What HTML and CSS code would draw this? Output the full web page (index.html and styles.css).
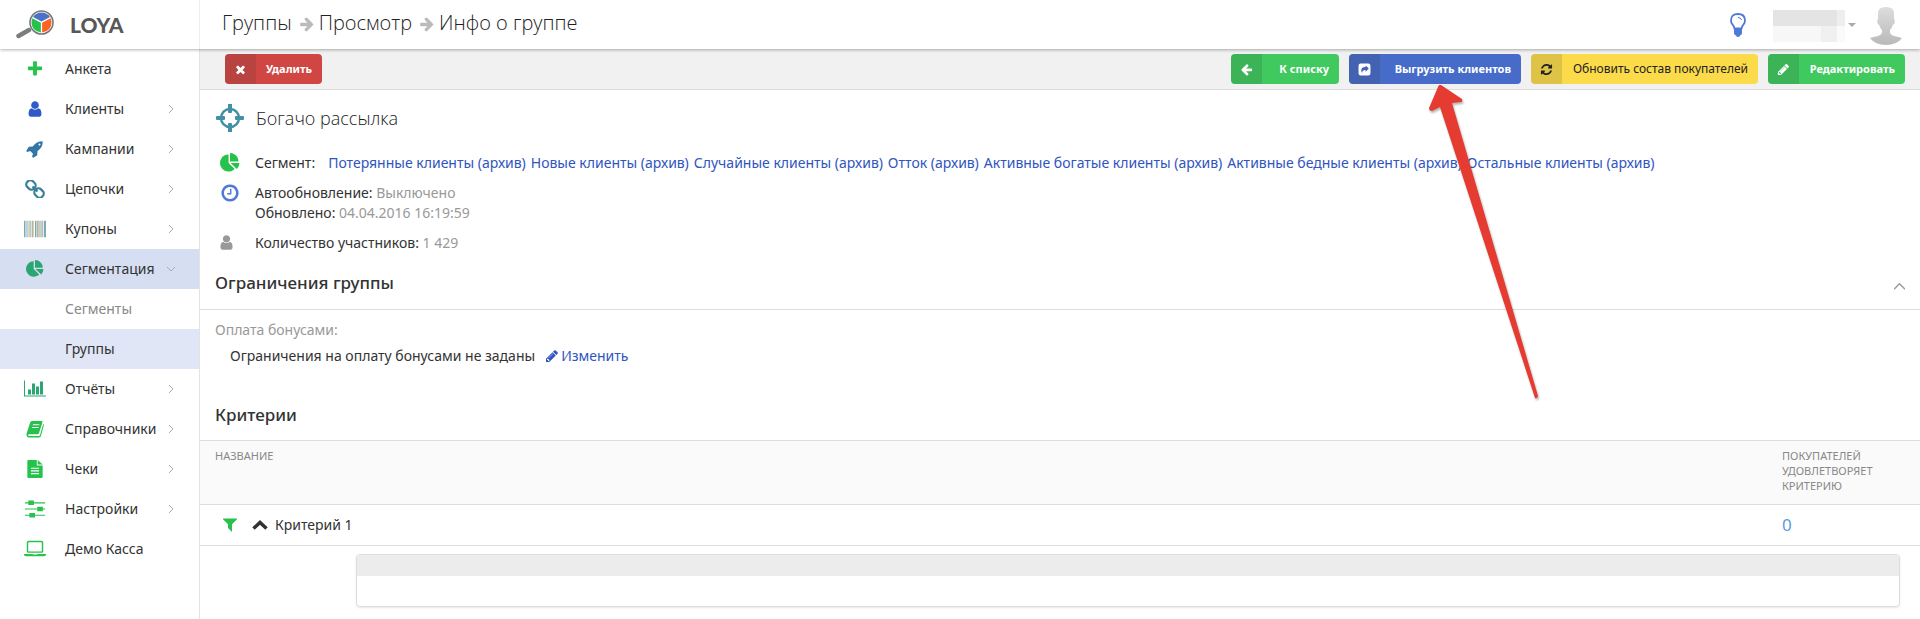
FILE: index.html
```html
<!DOCTYPE html>
<html lang="ru">
    <head>
        <meta charset="UTF-8" />
        <meta name="viewport" content="width=device-width, initial-scale=1.0" />
        <title>LOYA - Инфо о группе</title>

        <link rel="stylesheet" href="styles.css">
    </head>
    <body>
        <svg class="sprite" aria-hidden="true">
            <symbol id="i-plus" viewBox="0 0 1792 1792"><path d="M1600 736v192q0 40-28 68t-68 28h-416v416q0 40-28 68t-68 28h-192q-40 0-68-28t-28-68v-416h-416q-40 0-68-28t-28-68v-192q0-40 28-68t68-28h416v-416q0-40 28-68t68-28h192q40 0 68 28t28 68v416h416q40 0 68 28t28 68z"/></symbol>
            <symbol id="i-user" viewBox="0 0 1792 1792"><path d="M1536 1399q0 109-62.5 187t-150.5 78h-854q-88 0-150.5-78t-62.5-187q0-85 8.5-160.5t31.5-152 58.5-131 94-89 134.5-34.5q131 128 313 128t313-128q76 0 134.5 34.5t94 89 58.5 131 31.5 152 8.5 160.5zm-256-887q0 159-112.5 271.5t-271.5 112.5-271.5-112.5-112.5-271.5 112.5-271.5 271.5-112.5 271.5 112.5 112.5 271.5z"/></symbol>
            <symbol id="i-rocket" viewBox="0 0 1792 1792"><path d="M1440 448q0-40-28-68t-68-28-68 28-28 68 28 68 68 28 68-28 28-68zm224-288q0 249-75.5 430.5t-253.5 360.5q-81 80-195 176l-20 379q-2 16-16 26l-384 224q-7 4-16 4-12 0-23-9l-64-64q-13-14-8-32l85-276-281-281-276 85q-3 1-9 1-14 0-23-9l-64-64q-17-19-5-39l224-384q10-14 26-16l379-20q96-114 176-195 188-187 358-258t431-71q14 0 24 9.5t10 22.5z"/></symbol>
            <symbol id="i-chain" viewBox="0 0 18 18"><g fill="none" stroke="currentColor" stroke-width="2.200" transform="rotate(45 9 9)"><rect x="-1.500" y="5" width="9.500" height="8" rx="3.500"/><rect x="10" y="5" width="9.500" height="8" rx="3.500"/><path d="M5.500 9h7"/></g></symbol>
            <symbol id="i-barcode" viewBox="0 0 20 15"><path fill="#7fa9ad" d="M0 0h1v15H0zM5 0h1v15H5zM10 0h1v15h-1zM14 0h1v15h-1zM18 0h2v15h-2z"/><path fill="#b9d3e0" d="M1 0h3v15H1zM11 0h1v15h-1zM15 0h1v15h-1z"/><path fill="#dccfa0" d="M4 0h1v15H4zM8 0h1v15H8zM13 0h1v15h-1z"/><path fill="#a3a391" d="M7 0h1v15H7zM12 0h1v15h-1zM16 0h1v15h-1z"/></symbol>
            <symbol id="i-pie" viewBox="0 0 1792 1792"><path d="M768 890l546 546q-106 108-247.500 168t-298.500 60q-209 0-385.500-103t-279.500-279.500-103-385.500 103-385.500 279.500-279.500 385.500-103v762zm187 6h773q0 157-60 298.500t-168 247.500zm709-128h-768v-768q209 0 385.500 103t279.500 279.500 103 385.500z"/></symbol>
            <symbol id="i-chart" viewBox="0 0 22 17"><path d="M0 0h1v15h21v1H0zM4 9h3v5H4zM8 3h3v11H8zM12 6h3v8h-3zM16 1h3v13h-3z"/></symbol>
            <symbol id="i-book" viewBox="0 0 18 18"><path fill-rule="evenodd" d="M6 1h9.500q1.300 0 .9 1.400L13 13q-.4 1.300-1.600 1.300H3q-.9 0-.7.900t1.200.9H13q.7 0 1-.8L17.200 4q.9.400.6 1.500L15 15.800Q14.500 17.500 13 17.500H3Q.8 17.500.5 15q-.1-.8.1-1.500L4 3q.5-2 2-2zM7 4.300l-.3 1h6.500l.3-1zM6.200 7l-.3 1h6.500l.3-1z"/></symbol>
            <symbol id="i-file" viewBox="0 0 18 20"><path fill-rule="evenodd" d="M1.500 0H11v6h6.500v12.500q0 1.500-1.500 1.500H1.500Q.5 20 .5 18.500v-17Q.5 0 1.500 0zM12 0l5.500 5H12zM4.500 8.500v1.300h9V8.500zm0 3v1.300h9v-1.300zm0 3v1.300h9v-1.300z"/></symbol>
            <symbol id="i-sliders" viewBox="0 0 18 16"><path d="M0 2h18v1H0zM0 7.500h18v1H0zM0 13h18v1H0z"/><path d="M3 .5h5v4H3zM11 6h5v4h-5zM4 11.500h5v4H4z"/></symbol>
            <symbol id="i-laptop" viewBox="0 0 20 15"><path fill-rule="evenodd" d="M4 0h12q1.500 0 1.500 1.500v8Q17.500 11 16 11H4q-1.500 0-1.500-1.500v-8Q2.500 0 4 0zm.500 1.300q-.7 0-.7.700v7q0 .7.700.7h11q.7 0 .7-.7V2q0-.7-.7-.7zM0 12h8v.600h4V12h8v1q0 1-2 1H2q-2 0-2-1z"/></symbol>
            <symbol id="i-angle" viewBox="0 0 8 8"><path d="M2 0l4 4-4 4" fill="none" stroke="currentColor"/></symbol>
            <symbol id="i-left" viewBox="0 0 1792 1792"><path d="M1664 896v128q0 53-32.500 90.500t-84.500 37.500h-704l293 294q38 36 38 90t-38 90l-75 76q-37 37-90 37-52 0-91-37l-651-652q-37-37-37-90 0-52 37-91l651-650q38-38 91-38 52 0 90 38l75 74q38 38 38 91t-38 91l-293 293h704q52 0 84.500 37.500t32.500 90.500z"/></symbol>
            <symbol id="i-times" viewBox="0 0 1792 1792"><path d="M1490 1322q0 40-28 68l-136 136q-28 28-68 28t-68-28l-294-294-294 294q-28 28-68 28t-68-28l-136-136q-28-28-28-68t28-68l294-294-294-294q-28-28-28-68t28-68l136-136q28-28 68-28t68 28l294 294 294-294q28-28 68-28t68 28l136 136q28 28 28 68t-28 68l-294 294 294 294q28 28 28 68z"/></symbol>
            <symbol id="i-share" viewBox="0 0 12 12"><path fill-rule="evenodd" d="M2.500.500h7q2 0 2 2v7q0 2-2 2h-7q-2 0-2-2v-7q0-2 2-2zM7 2.200v1.600Q3 3.800 3 7q0 1.200.8 2.300Q3.700 6.500 7 6.500V8l3-2.900z"/></symbol>
            <symbol id="i-refresh" viewBox="0 0 1792 1792"><path d="M1639 1056q0 5-1 7-64 268-268 434.500t-478 166.500q-146 0-282.500-55t-243.500-157l-129 129q-19 19-45 19t-45-19-19-45v-448q0-26 19-45t45-19h448q26 0 45 19t19 45-19 45l-137 137q71 66 161 102t187 36q134 0 250-65t186-179q11-17 53-117 8-23 30-23h192q13 0 22.500 9.500t9.500 22.500zm25-800v448q0 26-19 45t-45 19h-448q-26 0-45-19t-19-45 19-45l138-138q-148-137-349-137-134 0-250 65t-186 179q-11 17-53 117-8 23-30 23h-199q-13 0-22.500-9.500t-9.500-22.500v-7q65-268 270-434.500t480-166.500q146 0 284 55.500t245 156.500l130-129q19-19 45-19t45 19 19 45z"/></symbol>
            <symbol id="i-pencil" viewBox="0 0 1792 1792"><path d="M491 1536l91-91-235-235-91 91v107h128v128h107zm523-928q0-22-22-22-10 0-17 7l-542 542q-7 7-7 17 0 22 22 22 10 0 17-7l542-542q7-7 7-17zm-54-192l416 416-832 832h-416v-416zm683 96q0 53-37 90l-166 166-416-416 166-165q36-38 90-38 53 0 91 38l235 234q37 39 37 91z"/></symbol>
            <symbol id="i-target" viewBox="0 0 28 28"><circle cx="14" cy="14" r="9" fill="none" stroke="currentColor" stroke-width="2.500"/><path d="M12 0h4v8q0 1-1 1h-2q-1 0-1-1zM12 28h4v-8q0-1-1-1h-2q-1 0-1 1zM0 13q0-1 1-1h7q1 0 1 1v2q0 1-1 1H1q-1 0-1-1zM28 13q0-1-1-1h-7q-1 0-1 1v2q0 1 1 1h7q1 0 1-1z"/></symbol>
            <symbol id="i-clock" viewBox="0 0 1792 1792"><path d="M1024 544v448q0 14-9 23t-23 9h-320q-14 0-23-9t-9-23v-64q0-14 9-23t23-9h224v-352q0-14 9-23t23-9h64q14 0 23 9t9 23zm416 352q0-148-73-273t-198-198-273-73-273 73-198 198-73 273 73 273 198 198 273 73 273-73 198-198 73-273zm224 0q0 209-103 385.500t-279.500 279.500-385.500 103-385.500-103-279.500-279.500-103-385.500 103-385.500 279.500-279.500 385.500-103 385.500 103 279.500 279.500 103 385.500z"/></symbol>
            <symbol id="i-filter" viewBox="0 0 14 14"><path d="M0 .5h14v.7L9 6.300V14L5 10V6.300L0 1.200z"/></symbol>
            <symbol id="i-up" viewBox="0 0 16 10"><path d="M1.500 8.500L8 2.500l6.500 6" fill="none" stroke="currentColor" stroke-width="3.500"/></symbol>
        </svg>

        <header class="topbar">
            <a class="logo" href="/">
                <svg viewBox="0 0 38 30" aria-hidden="true">
                    <path d="M2.500 26L13 20" stroke="#7d7d7d" stroke-width="4.500" stroke-linecap="round"/>
                    <circle cx="25.500" cy="12.500" r="11.500" fill="#fff" stroke="#777" stroke-width="1.600"/>
                    <path d="M25.500 11.500L17 7q3-4.500 8.500-4.500T34 7z" fill="#4a72c8"/>
                    <path d="M24.900 12.800v9.700q-9.400-1.500-9.400-10 0-2.300.9-4.200z" fill="#27c24c"/>
                    <path d="M26.100 12.800v9.700q9.400-1.500 9.400-10 0-2.300-.9-4.200z" fill="#fb6422"/>
                </svg>
                <span>LOYA</span>
            </a>
            <nav class="breadcrumbs">
                <a href="#">Группы</a>
                <svg class="crumb_arrow"><use href="#i-left"/></svg>
                <a href="#">Просмотр</a>
                <svg class="crumb_arrow"><use href="#i-left"/></svg>
                <span>Инфо о группе</span>
            </nav>
            <div class="account">
                <svg class="bulb" viewBox="0 0 16 24" aria-hidden="true">
                    <path d="M4.500 15.500Q4 13 2.400 11.300 1 9.800 1 7.500 1 1 8 1t7 6.500q0 2.300-1.400 3.800Q12 13 11.500 15.500z" fill="#fff" stroke="#4f78d8" stroke-width="1.800"/>
                    <path d="M8 4.500q3 0 3.500 2.500" fill="none" stroke="#4f78d8"/>
                    <path d="M4 15h8v5q0 1.500-2 2.500-.5 1.500-2 1.500t-2-1.500Q4 21.500 4 20z" fill="#4f78d8"/>
                </svg>
                <div class="user_name"></div>
                <span class="caret"></span>
                <svg class="avatar" viewBox="0 0 32 38" aria-hidden="true">
                    <linearGradient id="av" x2="0" y2="1"><stop stop-color="#ddd"/><stop offset="1" stop-color="#b9b9b9"/></linearGradient>
                    <path fill="url(#av)" d="M8 6Q8 0 16 0t8 6v6q1 0 .7 3t-1.900 3q-.8 3-2.800 5v3q1 2 4 3 5 1 8 2-5 7-16 7T0 31q3-1 8-2 3-1 4-3v-3q-2-2-2.800-5-1.600 0-1.900-3T8 12z"/>
                </svg>
            </div>
        </header>

        <div class="layout">
            <aside class="sidebar">
                <ul class="menu">
                    <li><a href="#"><svg class="green"><use href="#i-plus"/></svg>Анкета</a></li>
                    <li><a href="#"><svg class="blue"><use href="#i-user"/></svg>Клиенты<svg class="angle"><use href="#i-angle"/></svg></a></li>
                    <li><a href="#"><svg class="steel"><use href="#i-rocket"/></svg>Кампании<svg class="angle"><use href="#i-angle"/></svg></a></li>
                    <li><a href="#"><svg class="teal"><use href="#i-chain"/></svg>Цепочки<svg class="angle"><use href="#i-angle"/></svg></a></li>
                    <li><a href="#"><svg><use href="#i-barcode"/></svg>Купоны<svg class="angle"><use href="#i-angle"/></svg></a></li>
                    <li>
                        <a class="active" href="#"><svg class="sea"><use href="#i-pie"/></svg>Сегментация<svg class="angle open"><use href="#i-angle"/></svg></a>
                        <ul class="submenu">
                            <li><a href="#">Сегменты</a></li>
                            <li><a class="current" href="#">Группы</a></li>
                        </ul>
                    </li>
                    <li><a href="#"><svg class="sea"><use href="#i-chart"/></svg>Отчёты<svg class="angle"><use href="#i-angle"/></svg></a></li>
                    <li><a href="#"><svg class="green"><use href="#i-book"/></svg>Справочники<svg class="angle"><use href="#i-angle"/></svg></a></li>
                    <li><a href="#"><svg class="green"><use href="#i-file"/></svg>Чеки<svg class="angle"><use href="#i-angle"/></svg></a></li>
                    <li><a href="#"><svg class="green"><use href="#i-sliders"/></svg>Настройки<svg class="angle"><use href="#i-angle"/></svg></a></li>
                    <li><a href="#"><svg class="green"><use href="#i-laptop"/></svg>Демо Касса</a></li>
                </ul>
            </aside>

            <main class="content">
                <div class="toolbar">
                    <button class="btn btn_red"><span class="btn_icon"><svg><use href="#i-times"/></svg></span><span class="btn_label">Удалить</span></button>
                    <div class="toolbar_right">
                        <button class="btn btn_green btn_list"><span class="btn_icon"><svg><use href="#i-left"/></svg></span><span class="btn_label">К списку</span></button>
                        <div class="export">
                            <button class="btn btn_blue"><span class="btn_icon"><svg><use href="#i-share"/></svg></span><span class="btn_label">Выгрузить клиентов</span></button>
                            <svg class="pointer" viewBox="0 0 112 316" aria-hidden="true">
                                <path d="M12 0L33 14q1 3-1 3l-9 1L109 311q-1 3-3 2L11 22l-8 4Q0 26 0 23L9 2q1-3 3-2z"/>
                            </svg>
                        </div>
                        <button class="btn btn_yellow"><span class="btn_icon"><svg><use href="#i-refresh"/></svg></span><span class="btn_label">Обновить состав покупателей</span></button>
                        <button class="btn btn_green btn_edit"><span class="btn_icon"><svg><use href="#i-pencil"/></svg></span><span class="btn_label">Редактировать</span></button>
                    </div>
                </div>

                <section class="info">
                    <h1><svg><use href="#i-target"/></svg>Богачо рассылка</h1>
                    <div class="info_row">
                        <svg class="green"><use href="#i-pie"/></svg>
                        <div class="segments">
                            <span>Сегмент:</span>
                            <a href="#">Потерянные клиенты (архив)</a>
                            <a href="#">Новые клиенты (архив)</a>
                            <a href="#">Случайные клиенты (архив)</a>
                            <a href="#">Отток (архив)</a>
                            <a href="#">Активные богатые клиенты (архив)</a>
                            <a href="#">Активные бедные клиенты (архив)</a>
                            <a href="#">Остальные клиенты (архив)</a>
                        </div>
                    </div>
                    <div class="info_row">
                        <svg class="clock"><use href="#i-clock"/></svg>
                        <div>
                            <div>Автообновление: <span class="muted">Выключено</span></div>
                            <div>Обновлено: <span class="muted">04.04.2016 16:19:59</span></div>
                        </div>
                    </div>
                    <div class="info_row">
                        <svg class="members"><use href="#i-user"/></svg>
                        <div>Количество участников: <span class="muted">1 429</span></div>
                    </div>
                </section>

                <section class="limits">
                    <div class="limits_head">
                        <h2>Ограничения группы</h2>
                        <svg><use href="#i-angle"/></svg>
                    </div>
                    <div class="limits_body">
                        <p class="muted">Оплата бонусами:</p>
                        <p class="limits_text">Ограничения на оплату бонусами не заданы <a href="#"><svg><use href="#i-pencil"/></svg>Изменить</a></p>
                    </div>
                </section>

                <section class="criteria">
                    <h2>Критерии</h2>
                    <table>
                        <thead>
                            <tr>
                                <th>Название</th>
                                <th class="count_col">Покупателей удовлетворяет критерию</th>
                            </tr>
                        </thead>
                        <tbody>
                            <tr>
                                <td>
                                    <div class="criterion">
                                        <svg class="filter"><use href="#i-filter"/></svg>
                                        <svg class="up"><use href="#i-up"/></svg>
                                        Критерий 1
                                    </div>
                                </td>
                                <td class="count">0</td>
                            </tr>
                        </tbody>
                    </table>
                    <div class="panel">
                        <div class="panel_head"></div>
                    </div>
                </section>
            </main>
        </div>
    </body>
</html>
```

FILE: styles.css
```css
* {
    box-sizing: border-box;
}

body {
    margin: 0;
    font-family: "Noto Sans", "Open Sans", sans-serif;
    font-size: 14px;
    line-height: 20px;
    color: #333;
    background-color: #fff;
}

a {
    color: #2f55c0;
    text-decoration: none;
}

svg {
    fill: currentColor;
    flex-shrink: 0;
}

h1,
h2,
p,
ul {
    margin: 0;
    padding: 0;
}

.sprite {
    display: none;
}

.green {
    color: #27c24c;
}

.blue {
    color: #2f5bc7;
}

.steel {
    color: #3276a3;
}

.teal {
    color: #35809a;
}

.sea {
    color: #2ba673;
}

.muted {
    color: #999;
}

/* header */

.topbar {
    position: relative;
    z-index: 1;
    display: flex;
    height: 49px;
    box-shadow: 0 1px 3px rgba(0, 0, 0, 0.3);
    background-color: #fff;
}

.logo {
    width: 200px;
    padding: 0 16px;
    display: flex;
    align-items: center;
    gap: 16px;
    border-right: 1px solid #eee;
    font-family: Lato, "Open Sans", sans-serif;
    font-size: 21px;
    font-weight: 900;
    color: #585858;
}

.logo svg {
    width: 38px;
    height: 30px;
}

.breadcrumbs {
    flex: 1;
    padding: 0 22px 3px;
    display: flex;
    align-items: center;
    font-family: "Open Sans", sans-serif;
    font-size: 20px;
    font-weight: 300;
    color: #222;
}

.breadcrumbs a {
    color: #222;
}

.crumb_arrow {
    width: 16px;
    height: 16px;
    margin: 4px 4px 0 7px;
    color: #bbb;
    transform: rotate(180deg);
}

.account {
    display: flex;
    align-items: center;
    padding-right: 18px;
}

.bulb {
    width: 16px;
    height: 24px;
    margin-right: 27px;
}

.user_name {
    width: 72px;
    height: 32px;
    margin-top: 3px;
    background: linear-gradient(90deg, #e4e4e4 64px, #eee 64px) top / 100% 16px no-repeat,
        linear-gradient(90deg, #f7f7f7 48px, #f0f0f0 48px, #f0f0f0 64px, #fafafa 64px);
}

.caret {
    margin: 0 14px 0 3px;
    border: 4px solid transparent;
    border-top-color: #aaa;
    border-bottom: 0;
}

.avatar {
    width: 32px;
    height: 38px;
    margin-top: 2px;
}

/* sidebar */

.layout {
    display: flex;
    min-height: calc(100vh - 49px);
}

.sidebar {
    width: 200px;
    flex-shrink: 0;
    border-right: 1px solid #e3e3e3;
}

.menu,
.submenu {
    list-style: none;
}

.menu a {
    display: flex;
    align-items: center;
    height: 40px;
    padding: 0 24px;
    color: #333;
}

.menu a svg {
    width: 22px;
    height: 18px;
    margin-right: 19px;
}

.menu a .angle {
    width: 8px;
    height: 8px;
    margin: 0 0 0 auto;
    color: #aaa;
}

.menu a .open {
    transform: rotate(90deg);
}

.menu .active {
    background-color: #d6def2;
}

.menu .submenu a {
    padding-left: 65px;
    color: #888;
}

.menu .submenu .current {
    color: #333;
    background-color: #e0e6f5;
}

/* buttons */

.content {
    flex: 1;
    min-width: 0;
}

.toolbar {
    display: flex;
    justify-content: space-between;
    height: 41px;
    padding: 5px 15px 0 25px;
    background-color: #f1f1f1;
    border-bottom: 1px solid #ddd;
}

.toolbar_right {
    display: flex;
    gap: 10px;
}

.btn {
    display: flex;
    height: 30px;
    padding: 0;
    border: 0;
    border-radius: 4px;
    overflow: hidden;
    font-family: inherit;
    font-size: 11px;
    font-weight: bold;
    line-height: 30px;
    color: #fff;
    cursor: pointer;
}

.btn_icon {
    display: flex;
    align-items: center;
    justify-content: center;
    width: 31px;
    height: 30px;
    background-color: rgba(51, 51, 51, 0.14);
}

.btn_icon svg {
    width: 13px;
    height: 13px;
}

.btn_label {
    flex: 1;
    padding: 0 10px;
    text-align: right;
}

.btn_red {
    min-width: 97px;
    background-color: #cf4643;
}

.btn_green {
    background-color: #3fc95f;
}

.btn_list {
    min-width: 108px;
}

.btn_edit {
    min-width: 137px;
}

.btn_blue {
    min-width: 172px;
    background-color: #466bc8;
}

.btn_yellow {
    min-width: 227px;
    font-size: 12px;
    font-weight: normal;
    color: #222;
    background-color: #fcdb4a;
}

.export {
    position: relative;
}

.pointer {
    position: absolute;
    top: 31px;
    right: -20px;
    z-index: 2;
    width: 112px;
    height: 316px;
    fill: #e53b30;
    filter: drop-shadow(1px 2px 1px rgba(0, 0, 0, 0.3));
    pointer-events: none;
}

/* group info */

.info {
    padding: 13px 16px 0;
}

h1 {
    display: flex;
    align-items: center;
    gap: 12px;
    height: 30px;
    margin-bottom: 20px;
    font-family: "Open Sans", sans-serif;
    font-size: 18px;
    font-weight: 300;
    color: #222;
}

h1 svg {
    width: 28px;
    height: 28px;
    color: #4190a4;
}

.info_row {
    display: flex;
    margin-bottom: 10px;
}

.info_row svg {
    width: 20px;
    height: 20px;
    margin: 0 15px 0 4px;
}

.info_row .clock {
    color: #4f78d8;
}

.info_row .members {
    width: 17px;
    height: 17px;
    margin: 1px 20px 0 2px;
    color: #999;
}

.segments {
    display: flex;
    flex-wrap: wrap;
    column-gap: 5px;
}

.segments span {
    margin-right: 8px;
}

h2 {
    font-size: 17px;
    font-weight: 500;
}

.limits_head {
    display: flex;
    align-items: center;
    justify-content: space-between;
    height: 47px;
    padding: 0 15px 6px;
    border-bottom: 1px solid #ddd;
}

.limits_head svg {
    width: 11px;
    height: 11px;
    margin-top: 6px;
    color: #999;
    transform: rotate(-90deg);
}

.limits_body {
    padding: 10px 15px 0;
}

.limits_text {
    display: flex;
    margin-top: 6px;
    padding-left: 15px;
}

.limits_text a {
    display: flex;
    align-items: center;
    gap: 2px;
    margin-left: 10px;
}

.limits_text a svg {
    width: 14px;
    height: 14px;
}

/* criteria */

.criteria h2 {
    padding: 39px 15px 15px;
}

table {
    width: 100%;
    border-collapse: collapse;
}

th {
    padding: 7px 15px 11px;
    font-size: 11px;
    font-weight: normal;
    line-height: 15px;
    text-align: left;
    text-transform: uppercase;
    vertical-align: top;
    color: #888;
    background-color: #fafafa;
    border-top: 1px solid #ddd;
    border-bottom: 1px solid #ddd;
}

.count_col {
    width: 153px;
}

td {
    height: 41px;
    padding: 0 15px;
    border-bottom: 1px solid #ddd;
}

.criterion {
    display: flex;
    align-items: center;
}

.filter {
    width: 14px;
    height: 14px;
    margin: 0 15px 0 8px;
    color: #27c24c;
}

.up {
    width: 16px;
    height: 10px;
    margin-right: 7px;
}

.count {
    font-size: 17px;
    color: #5b9be0;
}

.panel {
    height: 53px;
    margin: 8px 20px 12px 156px;
    border: 1px solid #ddd;
    border-radius: 4px;
    box-shadow: 0 1px 2px rgba(0, 0, 0, 0.1);
}

.panel_head {
    height: 21px;
    background-color: #ececec;
}
```
